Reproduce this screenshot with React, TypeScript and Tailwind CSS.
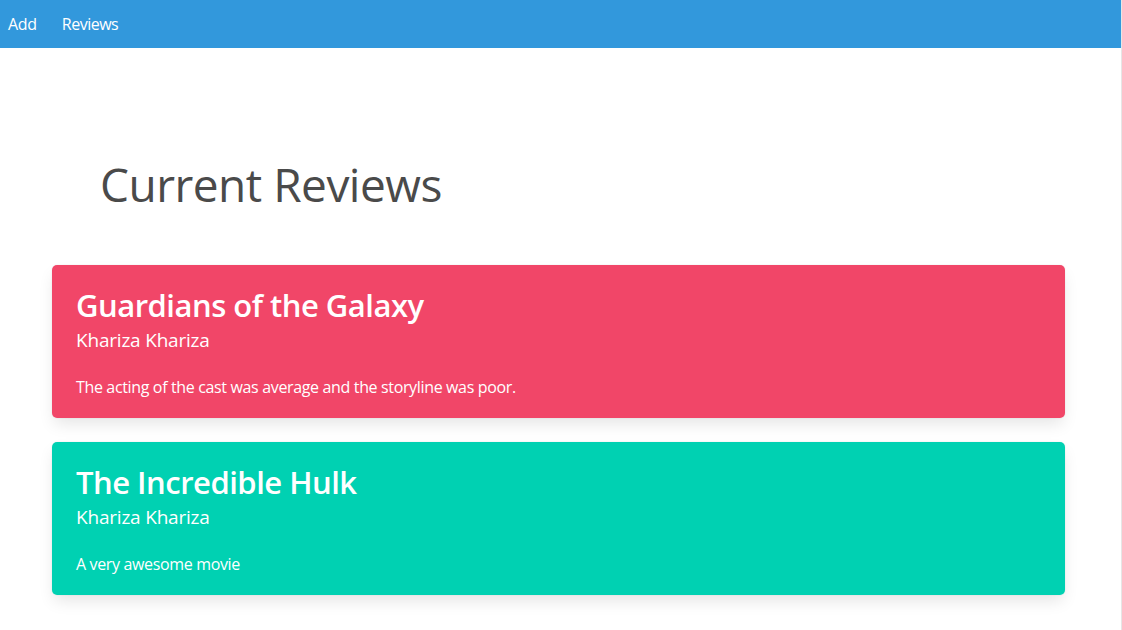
const reviews = [
    {
        title: "Guardians of the Galaxy",
        author: "Khariza Khariza",
        body: "The acting of the cast was average and the storyline was poor.",
        color: "bg-[#f14668]",
    },
    {
        title: "The Incredible Hulk",
        author: "Khariza Khariza",
        body: "A very awesome movie",
        color: "bg-[#00d1b2]",
    },
];

const App = () => {
    return (
        <div className="min-h-[630px] border-r border-[#e6e6e6] bg-white font-['Open_Sans',sans-serif]">
            <nav className="flex h-12 items-center bg-[#3298dc] pl-2 text-white">
                <a className="mr-[25px] text-[16px] tracking-[-0.3px]">Add</a>
                <a className="text-[16px] tracking-[-0.5px]">Reviews</a>
            </nav>
            <div className="px-[52px] pt-[100px]">
                <h1 className="ml-12 text-[46px] leading-[72px] tracking-[-0.5px] text-[#4a4a4a]">
                    Current Reviews
                </h1>
                <div className="mt-[45px] flex w-[1013px] flex-col gap-6">
                    {reviews.map((r) => (
                        <div
                            key={r.title}
                            className={`${r.color} h-[153px] rounded-[5px] px-6 pt-5 text-white shadow-[0_8px_16px_-2px_rgba(10,10,10,0.1),0_0_0_1px_rgba(10,10,10,0.02)]`}
                        >
                            <h2 className="text-[31px] font-semibold leading-[40px] tracking-[-0.5px]">
                                {r.title}
                            </h2>
                            <p className="text-[19px] leading-[30px] tracking-[-0.2px]">
                                {r.author}
                            </p>
                            <p className="mt-5 text-[16px] leading-6 tracking-[-0.35px]">
                                {r.body}
                            </p>
                        </div>
                    ))}
                </div>
            </div>
        </div>
    );
};

export default App;
